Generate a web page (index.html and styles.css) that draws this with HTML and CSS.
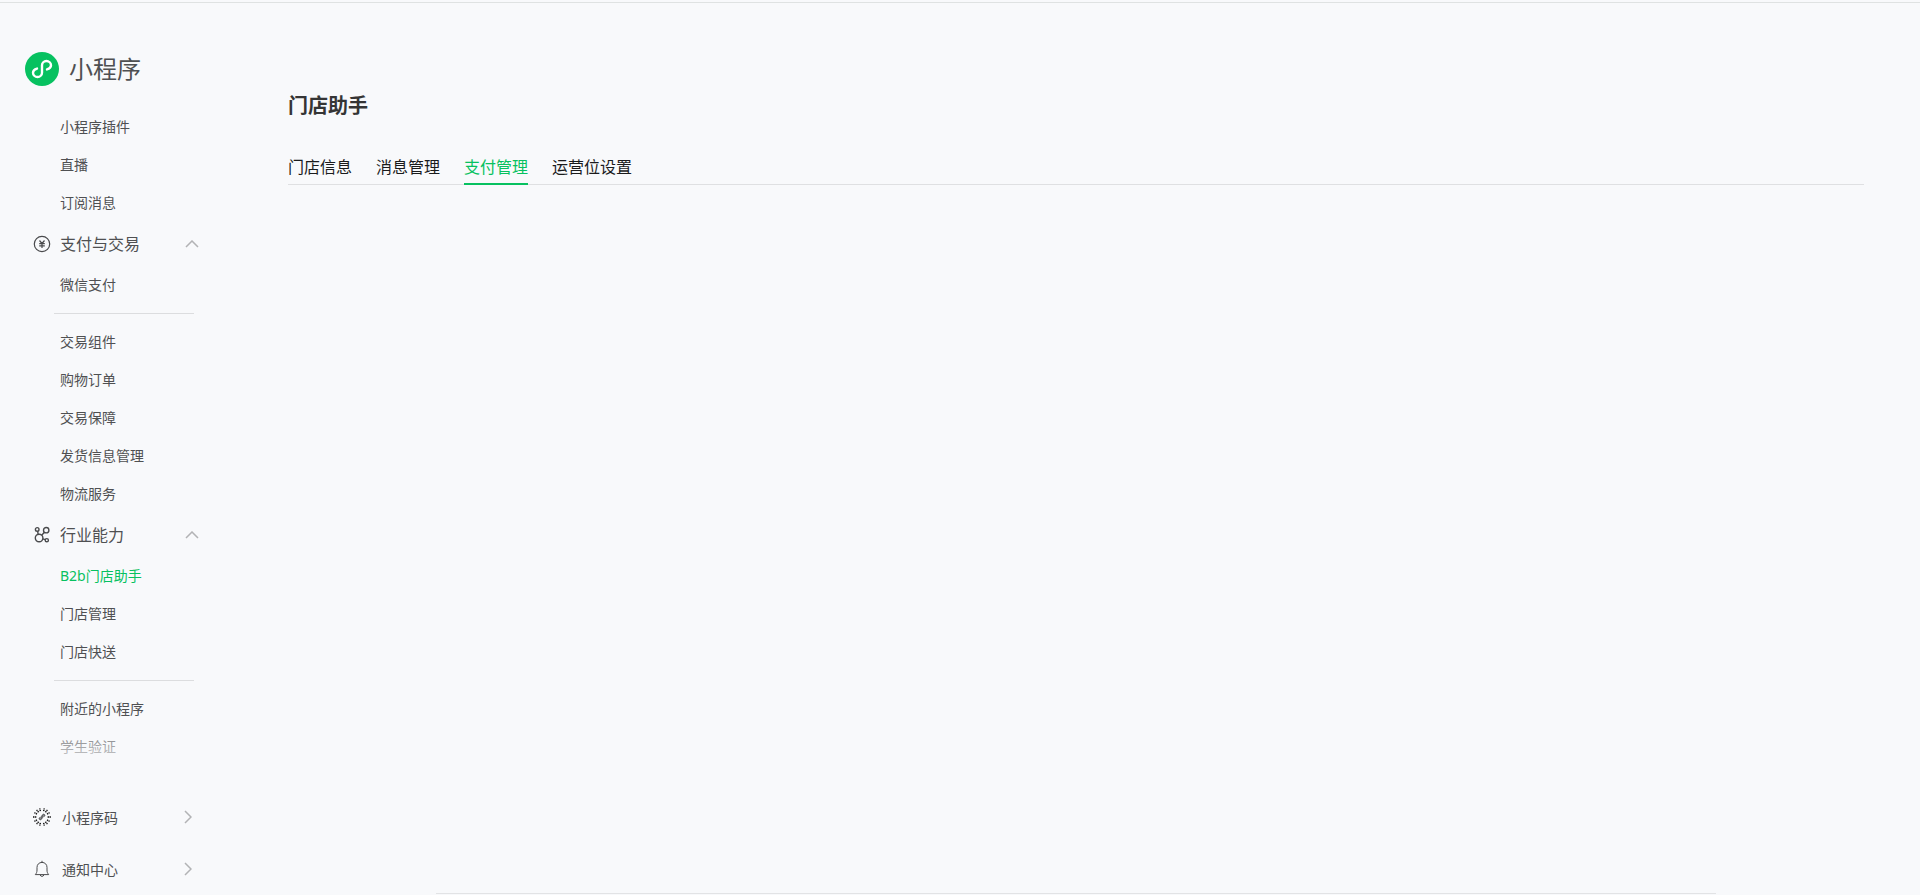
FILE: index.html
```html
<!DOCTYPE html>
<html lang="zh-CN">
<head>
    <meta charset="UTF-8">
    <meta name="viewport" content="width=device-width, initial-scale=1.0">
    <title>小程序</title>
    <link rel="stylesheet" href="styles.css">
</head>
<body>
    <div class="top-line"></div>
    <div class="layout">
        <aside class="sidebar">
            <a class="brand" href="#">
                <svg width="34" height="34" viewBox="0 0 34 34" fill="none" aria-hidden="true">
                    <circle cx="17" cy="17" r="17" fill="#07c160"/>
                    <path d="M12 16.6C9.5 17.3 8 18.7 8 20.7C8 23 10 25 12.6 25C15 25 17 23 17 20.7V13.3C17 11 19 9 21.4 9C24 9 26 11 26 13.3C26 15.3 24.5 16.7 22 17.4" stroke="#fff" stroke-width="2.4" stroke-linecap="round"/>
                </svg>
                <span class="brand-name">小程序</span>
            </a>

            <nav class="menu">
                <a class="menu-item" href="#">小程序插件</a>
                <a class="menu-item" href="#">直播</a>
                <a class="menu-item" href="#">订阅消息</a>

                <button class="menu-group" type="button" aria-expanded="true">
                    <svg class="icon" viewBox="0 0 18 18" aria-hidden="true">
                        <circle cx="9" cy="9" r="7.7"/>
                        <path d="M6.5 5.5L9 8.5L11.5 5.5M9 8.5V13M6.2 8.7H11.8M6.2 10.8H11.8"/>
                    </svg>
                    <span>支付与交易</span>
                    <svg class="arrow-up" viewBox="0 0 14 8" aria-hidden="true"><path d="M1 7L7 1L13 7"/></svg>
                </button>
                <a class="menu-item" href="#">微信支付</a>
                <hr class="divider">
                <a class="menu-item" href="#">交易组件</a>
                <a class="menu-item" href="#">购物订单</a>
                <a class="menu-item" href="#">交易保障</a>
                <a class="menu-item" href="#">发货信息管理</a>
                <a class="menu-item" href="#">物流服务</a>

                <button class="menu-group" type="button" aria-expanded="true">
                    <svg class="icon bold" viewBox="0 0 18 18" aria-hidden="true">
                        <circle cx="4.2" cy="3.4" r="1.8"/>
                        <circle cx="13.2" cy="4.2" r="2.7"/>
                        <circle cx="6.1" cy="12" r="3.8"/>
                        <circle cx="13.8" cy="14.2" r="1.6"/>
                        <path d="M4.6 5.2L5.2 8.3M11.4 6.2L8.7 9.2M9.8 12.9L12.2 13.7"/>
                    </svg>
                    <span>行业能力</span>
                    <svg class="arrow-up" viewBox="0 0 14 8" aria-hidden="true"><path d="M1 7L7 1L13 7"/></svg>
                </button>
                <a class="menu-item active" href="#">B2b门店助手</a>
                <a class="menu-item" href="#">门店管理</a>
                <a class="menu-item" href="#">门店快送</a>
                <hr class="divider">
                <a class="menu-item" href="#">附近的小程序</a>
                <a class="menu-item" href="#">学生验证</a>
            </nav>

            <div class="sidebar-footer">
                <a class="footer-item" href="#">
                    <svg class="icon thin" viewBox="0 0 18 18" aria-hidden="true">
                        <path class="rays" d="M14.6 9H18M0 9H3.4M14 6.1L16.6 4.6M12.4 4.3L14.4 1.9M10.6 3.2L11.3 .4M7.4 3.2L6.7 .4M5.6 4.3L3.6 1.9M4 6.1L1.4 4.6M4 11.9L1.4 13.4M5.6 13.7L3.6 16.1M7.4 14.8L6.7 17.6M10.6 14.8L11.3 17.6M12.4 13.7L14.4 16.1M14 11.9L16.6 13.4"/>
                        <path class="mark" d="M6.6 11.2L11.4 6.8"/>
                        <path d="M7.2 9.2C6.2 9.8 6 10.5 6.4 11.3C7.2 12.4 9 11.5 9 10V8C9 6.5 10.8 5.6 11.6 6.7C12 7.5 11.8 8.2 10.8 8.8"/>
                    </svg>
                    <span>小程序码</span>
                    <svg class="arrow-right" viewBox="0 0 8 14" aria-hidden="true"><path d="M1 1L7 7L1 13"/></svg>
                </a>
                <a class="footer-item" href="#">
                    <svg class="icon thin" viewBox="0 0 18 18" aria-hidden="true">
                        <path d="M2.3 14.6H15.7C14.4 13 14 12 14 10V7.4C14 4.5 12 2.4 9 2.4C6 2.4 4 4.5 4 7.4V10C4 12 3.6 13 2.3 14.6ZM9 .8V2.4M7.2 15C7.4 16.8 10.6 16.8 10.8 15"/>
                    </svg>
                    <span>通知中心</span>
                    <svg class="arrow-right" viewBox="0 0 8 14" aria-hidden="true"><path d="M1 1L7 7L1 13"/></svg>
                </a>
            </div>
        </aside>

        <main class="content">
            <h2>门店助手</h2>
            <div class="tabs">
                <a class="tab" href="#">门店信息</a>
                <a class="tab" href="#">消息管理</a>
                <a class="tab active" href="#">支付管理</a>
                <a class="tab" href="#">运营位设置</a>
            </div>
            <div class="page-end"></div>
        </main>
    </div>
</body>
</html>
```

FILE: styles.css
```css
* {
    margin: 0;
    padding: 0;
    box-sizing: border-box;
}

body {
    background-color: #f8f9fb;
    color: #1a1b1c;
    font-family: "Noto Sans", "Noto Sans CJK SC", sans-serif;
    font-size: 14px;
    overflow: hidden;
}

a {
    color: inherit;
    text-decoration: none;
}

.top-line {
    height: 3px;
    border-bottom: 1px solid #dfe2e2;
}

.layout {
    display: flex;
    height: calc(100vh - 3px);
}

/* sidebar */
.sidebar {
    display: flex;
    flex-direction: column;
    flex: 0 0 232px;
    color: #4f5052;
}

.brand {
    display: flex;
    align-items: center;
    gap: 10px;
    padding: 49px 25px 22px;
}

.brand-name {
    font-size: 24px;
    line-height: 34px;
}

.menu {
    position: relative;
    flex: 1;
    min-height: 0;
    overflow: hidden;
}

/* fades out the last entries above the footer */
.menu::after {
    content: "";
    position: absolute;
    left: 0;
    right: 0;
    bottom: 0;
    height: 56px;
    background: linear-gradient(rgba(248, 249, 251, 0), #f8f9fb);
    pointer-events: none;
}

.menu-item {
    display: block;
    padding-left: 60px;
    line-height: 38px;
}

.menu-item.active {
    color: #07c160;
}

.menu-group {
    display: flex;
    align-items: center;
    gap: 9px;
    width: 100%;
    height: 44px;
    padding: 0 33px;
    border: none;
    background: none;
    color: inherit;
    font: inherit;
    font-size: 16px;
    line-height: 24px;
    cursor: pointer;
}

.divider {
    width: 140px;
    margin: 9px 0 9px 54px;
    border: none;
    border-top: 1px solid #dcdddf;
}

.icon {
    width: 18px;
    height: 18px;
    fill: none;
    stroke: #4a4b4d;
    stroke-width: 1.2;
}

.icon.thin {
    stroke-width: 1;
}

.icon.bold {
    stroke-width: 1.4;
}

.icon .rays {
    stroke: #111;
    stroke-width: 1.4;
    stroke-dasharray: 1.4 .5;
}

.icon .mark {
    stroke: #8a8b8d;
    stroke-width: 2;
}

.arrow-up,
.arrow-right {
    margin-left: auto;
    fill: none;
    stroke: #b2b3b5;
    stroke-width: 1.5;
}

.arrow-up {
    width: 14px;
    height: 8px;
}

.arrow-right {
    width: 8px;
    height: 14px;
}

.sidebar-footer {
    padding-top: 17px;
}

.footer-item {
    display: flex;
    align-items: center;
    gap: 11px;
    height: 52px;
    padding: 0 40px 0 33px;
}

/* main area */
.content {
    display: flex;
    flex-direction: column;
    flex: 1;
    padding: 88px 56px 1px;
}

h2 {
    color: #353535;
    font-size: 20px;
    line-height: 30px;
    font-weight: 700;
}

.tabs {
    display: flex;
    gap: 24px;
    height: 64px;
    border-bottom: 1px solid #dfe0e2;
    align-items: flex-end;
}

.tab {
    margin-bottom: -1px;
    padding-bottom: 4px;
    border-bottom: 2px solid transparent;
    font-size: 16px;
    line-height: 24px;
}

.tab.active {
    color: #07c160;
    border-bottom-color: #07c160;
}

.page-end {
    width: 100%;
    max-width: 1280px;
    margin: auto auto 0;
    border-top: 1px solid #e2e3e5;
}
```
